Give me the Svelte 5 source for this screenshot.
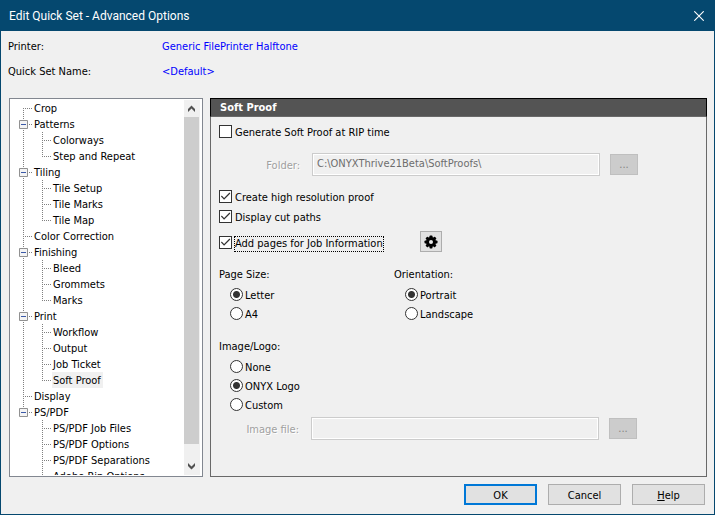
<script>
  const tree = [
    { name: 'Crop' },
    { name: 'Patterns', items: ['Colorways', 'Step and Repeat'] },
    { name: 'Tiling', items: ['Tile Setup', 'Tile Marks', 'Tile Map'] },
    { name: 'Color Correction' },
    { name: 'Finishing', items: ['Bleed', 'Grommets', 'Marks'] },
    { name: 'Print', items: ['Workflow', 'Output', 'Job Ticket', 'Soft Proof'] },
    { name: 'Display' },
    {
      name: 'PS/PDF',
      items: ['PS/PDF Job Files', 'PS/PDF Options', 'PS/PDF Separations', 'Adobe Rip Options']
    }
  ];

  let selected = 'Soft Proof';
  let collapsed = {};

  let generate = false;
  let folder = 'C:\\ONYXThrive21Beta\\SoftProofs\\';
  let highRes = true;
  let cutPaths = true;
  let jobInfo = true;
  let pageSize = 'Letter';
  let orientation = 'Portrait';
  let logo = 'ONYX Logo';
  let imageFile = '';

  function toggle(name) {
    collapsed = { ...collapsed, [name]: !collapsed[name] };
  }
</script>

<div class="dialog">
  <header class="titlebar">
    <h1>Edit Quick Set - Advanced Options</h1>
    <button class="close" aria-label="Close">
      <svg width="10" height="10" viewBox="0 0 10 10">
        <path d="M0.3 0.3L9.7 9.7M9.7 0.3L0.3 9.7" stroke="#fff" stroke-width="1.1" />
      </svg>
    </button>
  </header>

  <dl class="info">
    <dt>Printer:</dt>
    <dd>Generic FilePrinter Halftone</dd>
    <dt>Quick Set Name:</dt>
    <dd>&lt;Default&gt;</dd>
  </dl>

  <main class="content">
    <nav class="tree" aria-label="Options">
      <ul class="nodes">
        {#each tree as node}
          <li>
            <div class="row">
              {#if node.items}
                <button
                  class="expander"
                  aria-label="Toggle {node.name}"
                  aria-expanded={!collapsed[node.name]}
                  on:click={() => toggle(node.name)}
                >
                  <svg width="9" height="9" viewBox="0 0 9 9">
                    <path d="M2 4.5H7" stroke="#3b5aa8" />
                    {#if collapsed[node.name]}
                      <path d="M4.5 2V7" stroke="#3b5aa8" />
                    {/if}
                  </svg>
                </button>
              {/if}
              <button
                class="node"
                class:selected={selected === node.name}
                on:click={() => (selected = node.name)}>{node.name}</button
              >
            </div>
            {#if node.items && !collapsed[node.name]}
              <ul class="children">
                {#each node.items as item}
                  <li class="row">
                    <button
                      class="node"
                      class:selected={selected === item}
                      on:click={() => (selected = item)}>{item}</button
                    >
                  </li>
                {/each}
              </ul>
            {/if}
          </li>
        {/each}
      </ul>
      <div class="scrollbar" aria-hidden="true">
        <svg width="16" height="17" viewBox="0 0 16 17">
          <path d="M4 12V9L7.5 5.5L11 9V12L7.5 8.5Z" fill="#505050" />
        </svg>
        <div class="track"><div class="thumb"></div></div>
        <svg width="16" height="17" viewBox="0 0 16 17">
          <path d="M4 5V8L7.5 11.5L11 8V5L7.5 8.5Z" fill="#505050" />
        </svg>
      </div>
    </nav>

    <section class="panel">
      <h2>Soft Proof</h2>
      <div class="options">
        <label class="check"><input type="checkbox" bind:checked={generate} />Generate Soft Proof at RIP time</label>

        <div class="path">
          <label for="folder">Folder:</label>
          <input id="folder" type="text" bind:value={folder} disabled={!generate} />
          <button class="browse" disabled={!generate} aria-label="Browse for folder">...</button>
        </div>

        <div class="checks">
          <label class="check"><input type="checkbox" bind:checked={highRes} />Create high resolution proof</label>
          <label class="check"><input type="checkbox" bind:checked={cutPaths} />Display cut paths</label>
        </div>

        <div class="job">
          <label class="check focused"><input type="checkbox" bind:checked={jobInfo} /><span>Add pages for Job Information</span></label>
          <button class="settings" aria-label="Job information settings">
            <svg width="14" height="14" viewBox="0 0 14 14">
              <g fill="#000">
                <circle cx="7" cy="7" r="5" />
                {#each [0, 45, 90, 135] as angle}
                  <rect x="5.5" y="0.5" width="3" height="13" rx="0.8" transform="rotate({angle} 7 7)" />
                {/each}
              </g>
              <circle cx="7" cy="7" r="2" fill="#e8e8e8" />
            </svg>
          </button>
        </div>

        <div class="groups">
          <fieldset>
            <legend>Page Size:</legend>
            {#each ['Letter', 'A4'] as size}
              <label class="radio"><input type="radio" name="size" value={size} bind:group={pageSize} />{size}</label>
            {/each}
          </fieldset>
          <fieldset>
            <legend>Orientation:</legend>
            {#each ['Portrait', 'Landscape'] as side}
              <label class="radio"><input type="radio" name="side" value={side} bind:group={orientation} />{side}</label>
            {/each}
          </fieldset>
        </div>

        <fieldset>
          <legend>Image/Logo:</legend>
          {#each ['None', 'ONYX Logo', 'Custom'] as kind}
            <label class="radio"><input type="radio" name="logo" value={kind} bind:group={logo} />{kind}</label>
          {/each}
        </fieldset>

        <div class="path image">
          <label for="image">Image file:</label>
          <input id="image" type="text" bind:value={imageFile} disabled={logo !== 'Custom'} />
          <button class="browse" disabled={logo !== 'Custom'} aria-label="Browse for image">...</button>
        </div>
      </div>
    </section>
  </main>

  <footer>
    <button class="push default">OK</button>
    <button class="push">Cancel</button>
    <button class="push"><u>H</u>elp</button>
  </footer>
</div>

<style>
  :global(body) {
    margin: 0;
  }

  .dialog {
    box-sizing: border-box;
    height: 100vh;
    display: flex;
    flex-direction: column;
    border: 1px solid #05486f;
    border-top: 0;
    background: #f0f0f0;
    color: #000;
    font: 11px/16px 'DejaVu Sans Condensed', Tahoma, sans-serif;
  }

  button,
  input {
    font: inherit;
    color: inherit;
    margin: 0;
    box-sizing: border-box;
  }

  button {
    padding: 0;
  }

  ul,
  dl,
  dd {
    margin: 0;
    padding: 0;
    list-style: none;
  }

  svg {
    display: block;
  }

  .titlebar {
    display: flex;
    justify-content: space-between;
    align-items: center;
    height: 31px;
    flex: none;
    padding-left: 8px;
    background: #05486f;
    color: #fff;
  }

  h1 {
    margin: 0;
    font: 12px/16px Roboto, 'Segoe UI', sans-serif;
  }

  .close {
    display: grid;
    place-items: center;
    width: 31px;
    height: 31px;
    border: 0;
    background: none;
  }

  .info {
    display: grid;
    grid-template-columns: 154px 1fr;
    row-gap: 9px;
    padding: 8px 7px 18px;
  }

  .info dd {
    color: #00f;
  }

  .content {
    flex: 1;
    min-height: 0;
    display: flex;
    gap: 7px;
    padding: 0 7px 0 8px;
  }

  .tree {
    box-sizing: border-box;
    width: 194px;
    flex: none;
    display: flex;
    padding: 1px;
    border: 1px solid #828790;
    background: #fff;
  }

  .nodes {
    flex: 1;
    overflow-y: auto;
    scrollbar-width: none;
  }

  .nodes > li {
    background: repeating-linear-gradient(#808080 0 1px, transparent 1px 2px) 12px 0 / 1px 100% no-repeat;
  }

  .nodes > li:first-child {
    background-position: 12px 8px;
  }

  .nodes > li:last-child {
    background-size: 1px 8px;
  }

  .row {
    display: flex;
    align-items: center;
    height: 16px;
  }

  .nodes > li > .row {
    padding-left: 8px;
    background: repeating-linear-gradient(90deg, #808080 0 1px, transparent 1px 2px) 12px 8px / 9px 1px no-repeat;
  }

  .nodes > li > .row > .node:only-child {
    margin-left: 14px;
  }

  .expander {
    width: 9px;
    height: 9px;
    margin-right: 5px;
    border: 0;
    border-radius: 1px;
    background: #f4f4f4;
    box-shadow: inset 0 0 0 1px #919191;
  }

  .children {
    margin-left: 31px;
    background: repeating-linear-gradient(#808080 0 1px, transparent 1px 2px) 0 0 / 1px calc(100% - 8px) no-repeat;
  }

  .children .row {
    padding-left: 10px;
    background: repeating-linear-gradient(90deg, #808080 0 1px, transparent 1px 2px) 0 8px / 9px 1px no-repeat;
  }

  .node {
    height: 16px;
    padding: 2px 2px 0 1px;
    border: 0;
    background: none;
    line-height: 14px;
    white-space: nowrap;
  }

  .node.selected {
    background: #f0f0f0;
  }

  .scrollbar {
    width: 16px;
    flex: none;
    display: flex;
    flex-direction: column;
    margin-right: 1px;
    background: #f0f0f0;
  }

  .track {
    flex: 1;
  }

  .thumb {
    height: 96%;
    margin-right: 1px;
    background: #cdcdcd;
  }

  .panel {
    flex: 1;
    min-width: 0;
    box-sizing: border-box;
    border: 1px solid #696969;
    border-top: 0;
  }

  h2 {
    margin: 0 -1px;
    padding: 0 9px;
    border: 1px solid #000;
    border-bottom-color: #696969;
    background: #545454;
    color: #fff;
    font: bold 11px/17px 'DejaVu Sans Condensed', Tahoma, sans-serif;
  }

  .options {
    padding: 8px 7px 0 8px;
  }

  .check,
  .radio {
    display: flex;
    align-items: center;
    gap: 3px;
    width: max-content;
  }

  .radio {
    box-sizing: border-box;
    gap: 2px;
    height: 19px;
    padding-top: 2px;
    margin-left: 11px;
  }

  .check input,
  .radio input {
    appearance: none;
    width: 13px;
    height: 13px;
    flex: none;
    border: 1px solid #333;
    background: #fff;
    outline: 0;
  }

  .check input {
    margin-bottom: 3px;
  }

  .check input:checked::before {
    content: '';
    display: block;
    width: 11px;
    height: 11px;
    background: #333;
    clip-path: polygon(9% 50%, 16% 42%, 37% 64%, 86% 14%, 94% 22%, 37% 80%);
  }

  .radio input {
    margin-bottom: 2px;
    border-radius: 50%;
  }

  .radio input:checked {
    background: radial-gradient(circle, #333 3px, #fff 4px);
  }

  .focused span {
    line-height: 14px;
    outline: 1px dotted #000;
  }

  .path {
    display: grid;
    grid-template-columns: 93px 1fr 38px;
    align-items: center;
    margin: 12px 61px 0 0;
  }

  .path label {
    padding: 2px 12px 0 0;
    text-align: right;
    color: #a0a0a0;
    text-shadow: 1px 1px #fff;
  }

  .path input {
    width: 100%;
    min-width: 0;
    height: 23px;
    padding: 0 4px 2px;
    border: 1px solid #ccc;
    border-radius: 0;
    background: #f0f0f0;
    box-shadow: inset 0 0 0 1px #fff;
    color: #6d6d6d;
  }

  .browse {
    width: 28px;
    height: 21px;
    margin-left: 10px;
    border: 1px solid #bfbfbf;
    background: #ccc;
    color: #838383;
  }

  .checks {
    display: grid;
    gap: 4px;
    margin-top: 14px;
  }

  .job {
    display: grid;
    grid-template-columns: 201px auto;
    justify-content: start;
    align-items: end;
    margin-top: 5px;
  }

  .settings {
    display: grid;
    place-items: center;
    width: 22px;
    height: 21px;
    border: 1px solid #adadad;
    background: #e1e1e1;
  }

  .groups {
    display: grid;
    grid-template-columns: 175px auto;
    justify-content: start;
    margin: 15px 0 16px;
  }

  fieldset {
    min-width: 0;
    margin: 0;
    padding: 0;
    border: 0;
  }

  legend {
    padding: 0 0 2px;
  }

  .image {
    grid-template-columns: 92px 1fr 38px;
    margin: 3px 62px 0 0;
  }

  footer {
    display: flex;
    justify-content: flex-end;
    gap: 11px;
    padding: 7px 9px 9px;
  }

  .push {
    width: 73px;
    height: 21px;
    padding-top: 2px;
    border: 1px solid #adadad;
    background: #e1e1e1;
    line-height: 14px;
  }

  .default {
    border: 2px solid #0078d7;
  }
</style>
